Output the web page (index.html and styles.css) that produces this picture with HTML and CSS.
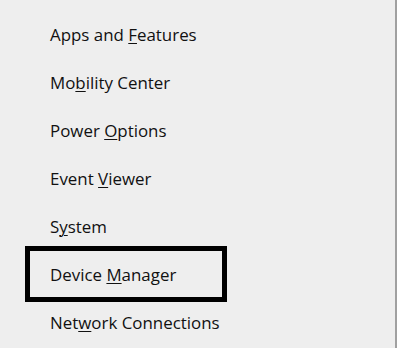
FILE: index.html
```html
<!DOCTYPE html>
<html lang="en">
<head>
<meta charset="utf-8">
<title>Quick Link Menu</title>
<link rel="stylesheet" href="styles.css">
</head>
<body>
<div class="menu">
  <ul class="items">
    <li class="item">Apps and <u>F</u>eatures</li>
    <li class="item">Mo<u>b</u>ility Center</li>
    <li class="item">Power <u>O</u>ptions</li>
    <li class="item">Event <u>V</u>iewer</li>
    <li class="item">S<u>y</u>stem</li>
    <li class="item item-focus">Device <u>M</u>anager</li>
    <li class="item">Net<u>w</u>ork Connections</li>
  </ul>
</div>
</body>
</html>
```
FILE: styles.css
```css
html, body {
  margin: 0;
  padding: 0;
  background: #eeeeee;
}
body {
  width: 397px;
  height: 348px;
  overflow: hidden;
}
.menu {
  box-sizing: border-box;
  width: 397px;
  height: 348px;
  border-right: 2px solid #a0a0a0;
  padding-top: 11px;
  font-family: "Open Sans", "Noto Sans", sans-serif;
  font-size: 16.9px;
  color: #111111;
}
.items {
  list-style: none;
  margin: 0;
  padding: 0;
}
.item {
  height: 48px;
  line-height: 48px;
  padding-left: 50px;
  white-space: nowrap;
}
.item u {
  text-decoration: underline;
  text-decoration-thickness: 1px;
  text-underline-offset: 2px;
}
.item-focus {
  box-sizing: border-box;
  width: 202px;
  height: 56px;
  margin: -5px 0 -3px 25px;
  padding-left: 20px;
  border: 5px solid #000000;
  line-height: 48px;
  overflow: hidden;
}
```
